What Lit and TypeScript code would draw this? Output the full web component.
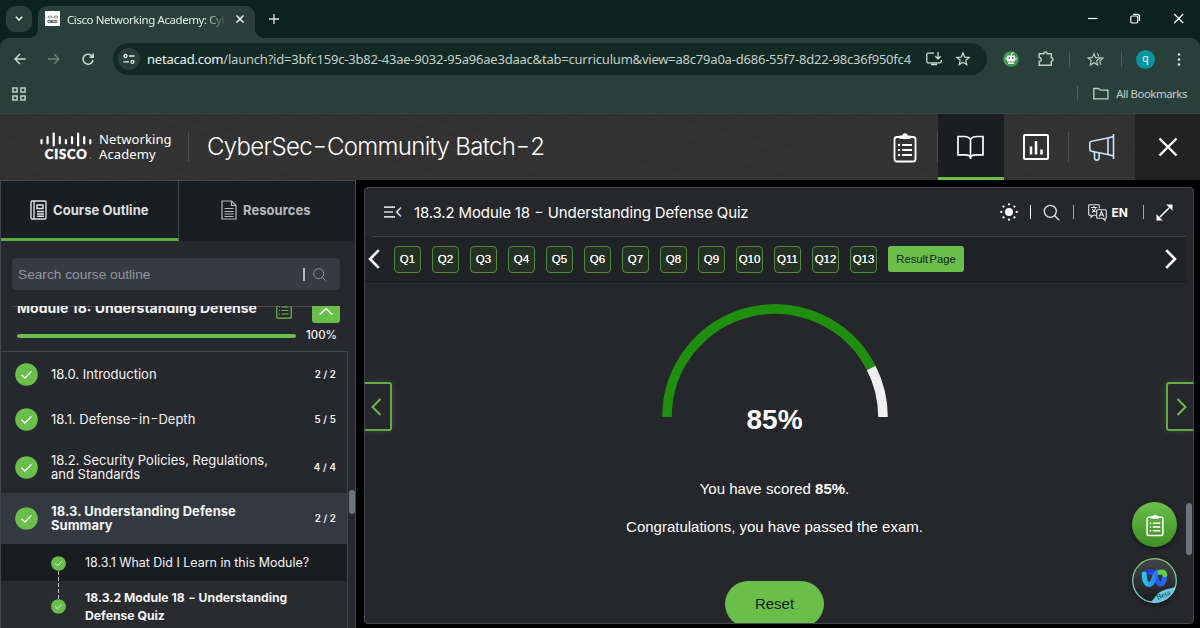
import { LitElement, html, svg, css } from "lit";
import { customElement, property } from "lit/decorators.js";
import { classMap } from "lit/directives/class-map.js";

const base = css`
  :host, * { box-sizing: border-box; }
  svg { display: block; flex: none; overflow: visible; }
  .t { white-space: nowrap; }
  .hy { display: inline-block; padding: 0 .1em; transform: scaleX(1.3) translateY(-.04em); }
`;

/* Hyphens are drawn wider and a little higher than the font's own. */
const wide = (s: string) => s.split("-").map((p, i) => (i ? html`<span class="hy">-</span>${p}` : p));

/* ---------- browser frame ---------- */

@customElement("browser-chrome")
class BrowserChrome extends LitElement {
  static styles = [base, css`
    :host { display: block; height: 113px; background: #0b231e; color: #e3ebe7; font-family: "Noto Sans", "Open Sans", sans-serif; }
    .strip { display: flex; height: 38px; padding: 6px 0 0 6px; background: #0b231e; }
    .menu { width: 26px; height: 26px; border-radius: 9px; background: #29403a; display: flex; align-items: center; justify-content: center; }
    .tab { position: relative; margin-left: 6px; width: 217px; height: 32px; border-radius: 9px 9px 0 0; background: #29403a; display: flex; padding: 5px 0 0 7px; }
    .tab::before, .tab::after { content: ""; position: absolute; bottom: 0; width: 9px; height: 9px; }
    .tab::before { left: -9px; background: radial-gradient(circle at 0 0, transparent 8.6px, #29403a 9.2px); }
    .tab::after { right: -9px; background: radial-gradient(circle at 100% 0, transparent 8.6px, #29403a 9.2px); }
    .title { margin-left: 7px; width: 158px; overflow: hidden; font-size: 11.500px; line-height: 17px; letter-spacing: -0.42px; -webkit-mask-image: linear-gradient(90deg, #000 138px, transparent 159px); mask-image: linear-gradient(90deg, #000 138px, transparent 159px); }
    .x { margin: 2px 0 0 9px; }
    .plus { margin: 8px 0 0 14px; }
    .win { margin-left: auto; display: flex; gap: 32px; padding: 5px 16px 0 0; }
    .body { background: #29403a; height: 75px; border-radius: 9px 9px 0 0; }
    .bar { display: flex; align-items: center; height: 42px; padding-left: 13px; }
    .nav { display: flex; gap: 20px; align-items: center; }
    .omni { margin-left: 18px; width: 874px; height: 32px; border-radius: 16px; background: #122a24; display: flex; align-items: center; padding-left: 5px; }
    .site { width: 22px; height: 22px; border-radius: 50%; background: #29403a; display: flex; align-items: center; justify-content: center; }
    .url { margin-left: 7px; width: 767px; font-size: 13px; letter-spacing: -.21px; line-height: 20px; color: #c3cec9; }
    .url b { font-weight: 400; color: #edf3f0; }
    .inst { margin-left: 12px; }
    .star { margin-left: 14px; }
    .ext { display: flex; align-items: center; margin-left: 16px; }
    .puzzle { margin-left: 19px; }
    .sep { width: 1px; height: 15px; background: #476058; }
    .s1 { margin-left: 14px; }
    .fav, .s2 { margin-left: 17px; }
    .avatar { margin-left: 14px; width: 19px; height: 19px; border-radius: 50%; background: #0795a3; font-size: 10.500px; line-height: 17px; text-align: center; color: #fff; }
    .dots { margin-left: 22px; }
    .marks { display: flex; align-items: center; justify-content: space-between; height: 27px; padding: 0 13px 0 12px; }
    .all { display: flex; align-items: center; font-size: 11.300px; letter-spacing: -.4px; color: #c3cec9; line-height: 16px; }
    .folder { margin: 0 7px 0 15px; }
  `];

  render() {
    return html`
      <div class="strip">
        <div class="menu"><svg width="8" height="6" fill="none" stroke="#e3ebe7" stroke-width="1.600"><path d="M.8 .8 4 4l3.200-3.200"/></svg></div>
        <div class="tab">
          <svg width="15" height="15" viewBox="0 0 15 15"><rect width="15" height="15" fill="#fff"/>
            <path d="M2 6v1M3.500 5v2M5 4v4M6.500 5v2M8 6v1M9.500 5v2M11 4v4M12.500 5v2" stroke="#777" stroke-width=".8"/>
            <text x="2.200" y="12.200" font-size="4" font-weight="800" textLength="10.500" font-family="Inter" fill="#333">CISCO</text></svg>
          <div class="title t">Cisco Networking Academy: Cyber</div>
          <svg class="x" width="12" height="12" viewBox="0 0 12 12" stroke="#f2f7f5" stroke-width="1.500"><path d="M2.500 2.500l7 7M9.500 2.500l-7 7"/></svg>
        </div>
        <svg class="plus" width="10" height="10" stroke="#dce6e1" stroke-width="1.300"><path d="M5 0v10M0 5h10"/></svg>
        <div class="win">
          <svg width="11" height="14" stroke="#fff" stroke-width="1.200"><path d="M1 7.500h9.500"/></svg>
          <svg width="11" height="14" fill="none" stroke="#fff" stroke-width="1.200"><rect x=".8" y="5" width="7" height="7" rx="1.500"/><path d="M3 3.300h4.200a2.300 2.300 0 0 1 2.300 2.300v4.200"/></svg>
          <svg width="11" height="14" stroke="#fff" stroke-width="1.200"><path d="M1.200 3l9 9M10.200 3l-9 9"/></svg>
        </div>
      </div>
      <div class="body">
        <div class="bar">
          <div class="nav">
            <svg width="14" height="14" fill="none" stroke="#cfdad5" stroke-width="1.400"><path d="M12.500 7H2M7 2 2 7l5 5"/></svg>
            <svg width="14" height="14" fill="none" stroke="#6d837b" stroke-width="1.300"><path d="M1 7h10.500M7 2l5 5-5 5"/></svg>
            <svg width="14" height="14" fill="none" stroke="#cfdad5" stroke-width="1.500"><path d="M11.300 4.500A5 5 0 1 0 12 8M12.200 1.500v3.700H8.500"/></svg>
          </div>
          <div class="omni">
            <div class="site"><svg width="12" height="12" fill="none" stroke="#e3ebe7" stroke-width="1.300"><circle cx="2.500" cy="3" r="1.500"/><path d="M6 3h5.500M.5 8.800H6"/><circle cx="9.500" cy="8.800" r="1.500"/></svg></div>
            <div class="url t"><b>netacad.com</b>/launch?id=3bfc159c-3b82-43ae-9032-95a96ae3daac&amp;tab=curriculum&amp;view=a8c79a0a-d686-55f7-8d22-98c36f950fc4</div>
            <svg class="inst" width="16" height="14" fill="none" stroke="#cfdad5" stroke-width="1.300"><path d="M8 1.200H2A1.200 1.200 0 0 0 .8 2.400v7.200a1.200 1.200 0 0 0 1.200 1.200h12a1.200 1.200 0 0 0 1.200-1.200V8M5 12.500h6M12 0v6.500M9.300 4.200 12 6.800l2.700-2.600"/></svg>
            <svg class="star" width="14" height="14" fill="none" stroke="#cfdad5" stroke-width="1.200"><path d="M7 .9l1.700 4.200 4.500.3-3.500 2.900 1.100 4.400L7 10.300l-3.800 2.400 1.100-4.400L.8 5.400l4.500-.3z"/></svg>
          </div>
          <div class="ext">
            <svg width="16" height="16"><circle cx="8" cy="8" r="7.800" fill="#439a52"/><path d="M8.500 5V2.500l2-.8" stroke="#fff" fill="none"/><rect x="4" y="4.500" width="8" height="6" rx="1" fill="#fff"/><path d="M5 11.500h6v1.500H5zM2.600 6.500h1v2.500h-1zM12.400 6.500h1v2.500h-1z" fill="#fff"/><path d="M5.500 6.200H7v1.500H5.500zM9 6.200h1.500v1.500H9z" fill="#2a7b3c"/></svg>
            <svg class="puzzle" width="17" height="16" fill="none" stroke="#c3cec9" stroke-width="1.400"><path d="M1.200 2.700h4.500a1.700 1.700 0 0 1 3.400 0h4.200v4a1.700 1.700 0 0 1 0 3.400v4.200H1.200v-3.800a2 2 0 0 0 0-4z"/></svg>
            <div class="sep s1"></div>
            <svg class="fav" width="17" height="15" fill="none" stroke="#c3cec9" stroke-width="1.100"><path d="M7 1.600l1.700 4 4.300.3-3.300 2.800 1 4.300L7 10.700 3.300 13l1-4.300L1 5.900l4.300-.3zM10.500 1.300l1.300 3.300M13.300 5.800l2.700.3-3.200 2.700 1 4"/></svg>
            <div class="sep s2"></div>
            <div class="avatar">q</div>
            <svg class="dots" width="4" height="15" fill="#dce6e1"><circle cx="2" cy="2.500" r="1.300"/><circle cx="2" cy="7.500" r="1.300"/><circle cx="2" cy="12.500" r="1.300"/></svg>
          </div>
        </div>
        <div class="marks">
          <svg width="14" height="14" fill="none" stroke="#c3cec9" stroke-width="1.500"><path d="M.9.900h4.200v4.200H.9zM8.900.900h4.200v4.200H8.900zM.9 8.900h4.200v4.200H.9zM8.900 8.900h4.200v4.200H8.900z"/></svg>
          <div class="all"><div class="sep"></div>
            <svg class="folder" width="16" height="13" fill="none" stroke="#c3cec9" stroke-width="1.300"><path d="M.8 11.800V1.500h4.800l1.700 1.700h7.600v8.600z"/></svg>
            <span class="t">All Bookmarks</span></div>
        </div>
      </div>`;
  }
}

/* ---------- academy header ---------- */

const clipboard = (w: number, h: number, sw = 1.8) => svg`
  <svg width=${w} height=${h} viewBox="0 0 24 31" fill="none" stroke="#fff" stroke-width=${sw}>
    <rect x="1.500" y="5" width="21" height="24.500" rx="2.500"/>
    <path d="M6.500 6V3.500h2.700a2.900 2.900 0 0 1 5.600 0h2.700V6a1 1 0 0 1-1 1h-9a1 1 0 0 1-1-1" fill="#fff" stroke="none"/>
    <path d="M9 13h10M9 18h10M9 23h10M5 13h2M5 18h2M5 23h2"/>
  </svg>`;

@customElement("academy-header")
class AcademyHeader extends LitElement {
  static styles = [base, css`
    :host { display: flex; height: 67px; border-top: 1px solid #2f4843; background: repeating-linear-gradient(14deg, #323232 0 7px, #343434 9px 10px); color: #fff; }
    .brand { display: flex; width: 189px; height: 30px; margin-top: 18px; padding-left: 40px; border-right: 1px solid #505050; }
    .words { margin-left: 5px; font: 13px/15px "Noto Sans", sans-serif; letter-spacing: .1px; }
    .name { margin: 16px 0 0 18px; font: 350 24px/34px Inter, sans-serif; letter-spacing: -.68px; }
    .tools { margin-left: auto; display: flex; height: 66px; }
    .tool { position: relative; width: 65.500px; display: flex; align-items: center; justify-content: center; }
    .tool.line::after { content: ""; position: absolute; right: 0; top: 18px; width: 1px; height: 30px; background: #515151; }
    .on { background: #1a1d21; border-bottom: 3px solid #6abf4b; padding-top: 3px; }
    .close { background: #222; padding-left: 2px; }
  `];

  render() {
    const bars = [2, 1, 0, 1, 2, 1, 0, 1, 2];
    const ys = (k: number) => (k === 0 ? [1.5, 13.5] : k === 1 ? [5, 11.3] : [8, 11.3]);
    return html`
      <div class="brand">
        <svg width="54" height="30" stroke="#fff" stroke-width="2.200">
          ${bars.map((k, i) => svg`<path stroke-linecap="round" d=${`M${1.5 + i * 6.1} ${ys(k)[0]}V${ys(k)[1]}`}/>`)}
          <text x="4.800" y="27" stroke="#fff" stroke-width=".4" fill="#fff" font-family="Lato, sans-serif" font-size="13" font-weight="900" textLength="42">CISCO</text>
          <circle cx="50.500" cy="26" r=".7" fill="#999" stroke="none"/>
        </svg>
        <div class="words t"><div>Networking</div><div>Academy</div></div>
      </div>
      <div class="name t">${wide("CyberSec-Community Batch-2")}</div>
      <div class="tools">
        <div class="tool line">${clipboard(24, 31)}</div>
        <div class="tool on"><svg width="27" height="25" fill="none" stroke="#fff" stroke-width="1.700"><path d="M13.500 4.200C12 2.200 10 1.500 7 1.500H1v18.300h7.500c3 0 4.300.8 5 2.200.7-1.400 2-2.200 5-2.200H26V1.500h-6c-3 0-5 .7-6.500 2.700zM13.500 4.200V24"/></svg></div>
        <div class="tool line"><svg width="26" height="26" fill="none" stroke="#fff" stroke-width="1.900"><rect x="1" y="1" width="24" height="24" rx="1"/><path stroke-width="2.500" d="M8 20.500v-8M13 20.500V7M18.500 20.500v-5"/></svg></div>
        <div class="tool"><svg width="27" height="28" fill="none" stroke="#c4e6fa" stroke-width="1.600"><path d="M20 5 3.500 8.200a2 2 0 0 0-1.700 2v6a2 2 0 0 0 1.700 2L20 21.500z"/><path d="M20 5l5.500-1.500v19.500L20 21.500M25.500 1v25M6.500 18.800v6a2.300 2.300 0 0 0 4.600 0v-5"/></svg></div>
        <div class="tool close"><svg width="20" height="20" stroke="#fff" stroke-width="2.400"><path d="M1.500 1.500l17 17M18.500 1.500l-17 17"/></svg></div>
      </div>`;
  }
}

/* ---------- course outline ---------- */

const check = (d: number) => svg`
  <svg width=${d} height=${d} viewBox="0 0 23 23"><circle cx="11.500" cy="11.500" r="11.300" fill="#6abf4b"/><path d="M6.500 11.700l3.400 3.300 6.500-6.500" fill="none" stroke="#fff" stroke-width="1.300"/></svg>`;

@customElement("course-outline")
class CourseOutline extends LitElement {
  @property({ attribute: false }) rows = [
    { name: "18.0. Introduction", n: "2 / 2" },
    { name: "18.1. Defense-in-Depth", n: "5 / 5" },
    { name: "18.2. Security Policies, Regulations,\nand Standards", n: "4 / 4", tall: true },
    { name: "18.3. Understanding Defense\nSummary", n: "2 / 2", tall: true, on: true },
  ];

  static styles = [base, css`
    :host { display: flex; flex-direction: column; width: 356px; height: 448px; overflow: hidden; background: #27282e; border: 1px solid #43464c; border-bottom: 0; color: #f3f4f5; font-family: Inter, sans-serif; }
    .tabs { display: flex; height: 60px; flex: none; }
    .tab { flex: 1; display: flex; align-items: center; background: #1a1d21; font-weight: 700; font-size: 13px; color: #b8babd; padding: 0 0 2px 42px; gap: 6px; letter-spacing: .05px; }
    .tab.on { flex: none; width: 178px; color: #dee0e2; border-bottom: 3px solid #5aae3d; border-right: 1px solid #43464c; padding: 1px 0 0 29px; }
    .search { flex: none; display: flex; align-items: center; margin: 17px 15px 0 11px; height: 32px; border-radius: 4px; background: #363a42; padding: 0 14px 0 6px; font: 13.700px "Liberation Sans", sans-serif; color: #93969b; }
    .caret { margin-left: auto; width: 2px; height: 13px; background: #b4b7bb; margin-right: 8px; }
    .scroll { position: relative; margin-top: 16px; flex: 1; overflow: hidden; }
    .mod { display: flex; flex-direction: column; height: 44px; padding: 0 15px 0 16px; }
    .rule { height: 1px; margin: 0 15px 0 11px; background: #45484e; }
    .clip { height: 17px; overflow: hidden; display: flex; align-items: flex-end; margin-top: -1px; }
    .mname { width: 259px; font-weight: 700; font-size: 14px; line-height: 18px; height: 18px; margin-bottom: 6px; }
    .list-ico { margin-bottom: 4px; }
    .up { width: 28px; height: 30px; flex: none; background: #6abf4b; border-radius: 3px; margin-left: auto; display: flex; justify-content: center; padding-top: 14px; }
    .prog { display: flex; align-items: center; justify-content: space-between; height: 23px; font-size: 11.500px; padding-right: 3px; font-weight: 500; }
    .track { width: 279px; height: 4px; border-radius: 2px; background: #6abf4b; margin-top: 3px; }
    .list { width: 347px; border-top: 1px solid #43464c; border-right: 1px solid #43464c; height: 290px; }
    .row { display: flex; align-items: center; height: 45px; padding: 0 11px 0 14px; font-size: 13px; }
    .row.tall { height: 51px; }
    .row.on { background: #343840; font-weight: 700; letter-spacing: .05px; }
    .label { margin-left: 13px; white-space: pre; line-height: 14.500px; margin-top: -1px; }
    .count { margin-left: auto; font-size: 9.700px; font-weight: 600; letter-spacing: .15px; }
    .sub { display: flex; align-items: center; height: 37px; padding: 1px 0 0 50px; background: #191c20; font-size: 12.450px; line-height: 18px; position: relative; }
    .sub.last { height: 50px; background: #2a2b2f; font-weight: 700; font-size: 12.200px; }
    .sub span.s { margin-left: 19px; white-space: pre; }
    .link { position: absolute; left: 57px; top: 27px; width: 1px; height: 28px; background: repeating-linear-gradient(#b5b8bb 0 4px, transparent 4px 6px); z-index: 1; }
    .thumb { position: absolute; right: 0; top: 184px; width: 6px; height: 24px; border-radius: 3px; background: #6d737d; }
  `];

  render() {
    return html`
      <div class="tabs">
        <div class="tab on"><svg width="17" height="20" fill="none" stroke="#dee0e2" stroke-width="1.400"><rect x="1" y="1" width="15" height="18" rx="1"/><path d="M4 1v18M7 5h6v3.500H7zM7 11.500h7M7 14h7M7 16.300h7"/></svg><span class="t">Course Outline</span></div>
        <div class="tab"><svg width="16" height="20" fill="none" stroke="#b8babd" stroke-width="1.200"><path d="M1 1h9.500L15 5.500V19H1zM10.500 1v4.500H15M3.500 8.500h9M3.500 11.500h9M3.500 14h9M3.500 16.500h9"/></svg><span class="t">Resources</span></div>
      </div>
      <div class="search"><span class="t">Search course outline</span><div class="caret"></div><svg width="13" height="13" fill="none" stroke="#93969b" stroke-width="1"><circle cx="5.700" cy="5.700" r="5"/><path d="M9.300 9.300l3.300 3.300"/></svg></div>
      <div class="scroll">
        <div class="rule"></div>
        <div class="mod">
          <div class="clip">
            <div class="mname t">Module 18: Understanding Defense</div>
            <svg class="list-ico" width="16" height="20" fill="none" stroke="#6abf4b" stroke-width="1.200"><rect x=".8" y=".8" width="14.400" height="18.400" rx="1"/><path d="M5.500 8h7M5.500 11.500h7M5.500 15h7M3 8h1M3 11.500h1M3 15h1"/></svg>
            <div class="up"><svg width="14" height="9" fill="none" stroke="#fff" stroke-width="1.600"><path d="M.8 7.500 7 1.500l6.200 6"/></svg></div>
          </div>
          <div class="prog"><div class="track"></div><span>100%</span></div>
        </div>
        <div class="list">
          ${this.rows.map((r) => html`<div class=${classMap({ row: true, tall: !!r.tall, on: !!r.on })}>${check(23)}<div class="label">${wide(r.name)}</div><div class="count">${r.n}</div></div>`)}
          <div class="sub"><div class="link"></div>${check(15)}<span class="s">18.3.1 What Did I Learn in this Module?</span></div>
          <div class="sub last">${check(15)}<span class="s">${wide("18.3.2 Module 18 - Understanding\nDefense Quiz")}</span></div>
        </div>
        <div class="thumb"></div>
      </div>`;
  }
}

/* ---------- quiz panel ---------- */

@customElement("quiz-panel")
class QuizPanel extends LitElement {
  @property({ type: Number }) score = 85;

  static styles = [base, css`
    :host { position: relative; display: flex; flex-direction: column; width: 830px; height: 437px; margin: 7px 0 0 8px; overflow: hidden; background: #26272b; border: 1px solid #45474c; border-radius: 4px; color: #fff; font-family: "Liberation Sans", Arial, sans-serif; }
    .head { display: flex; align-items: center; height: 49px; margin: 0 7px; padding: 0 13px 0 12px; border-bottom: 1px solid #3f4146; flex: none; font-family: Inter, sans-serif; }
    .title { margin-left: 12px; font-size: 15px; letter-spacing: -.14px; }
    .acts { margin-left: auto; display: flex; align-items: center; }
    .bar { width: 1px; height: 14px; background: #a3a5a8; }
    .b1 { margin: 0 12px; background: #fff; }
    .b2 { margin: 0 14px 0 13px; }
    .b3 { margin: 0 12px 0 15px; }
    .en { font-weight: 700; font-size: 12px; margin-left: 5px; }
    .qs { display: flex; align-items: center; height: 45px; padding: 0 9px 0 3px; background: #212227; border-bottom: 1px solid #1a1b1f; flex: none; margin-right: 7px; }
    .list { display: flex; gap: 11px; margin-left: 14px; }
    .q { width: 27px; height: 27px; border: 1px solid #4f8a3c; border-radius: 4px; background: #243024; font-size: 11.500px; line-height: 25px; text-align: center; text-shadow: 0 0 .5px #fff; }
    .q span { margin: 0 -4px; }
    .res { width: 76px; height: 26px; border-radius: 3px; background: #6abf4b; color: #14210e; font-size: 11.300px; line-height: 26px; text-align: center; word-spacing: -2px; }
    .next { margin-left: auto; }
    .body { display: flex; flex-direction: column; align-items: center; padding-top: 22px; margin-right: 9px; flex: 1; }
    .gauge { width: 226px; height: 113px; }
    .pct { font-weight: 700; font-size: 28px; line-height: 32px; margin-top: -13px; }
    p { margin: 0; font-size: 15px; line-height: 18px; }
    .p1 { margin-top: 44px; }
    .p2 { margin-top: 20px; }
    .reset { margin-top: 45px; width: 99px; height: 46px; flex: none; border-radius: 23px; background: #6abf4b; color: #101a0b; font-size: 15px; line-height: 46px; text-align: center; }
    .side { position: absolute; top: 194px; height: 49px; width: 27px; background: #26272b; border: 2px solid #5fae42; display: flex; align-items: center; justify-content: center; box-shadow: 0 0 8px rgba(255,255,255,.12); }
    .l { left: 0; border-left: 0; border-radius: 0 3px 3px 0; padding-right: 2px; }
    .r { right: 0; border-right: 0; border-radius: 3px 0 0 3px; padding-left: 2px; }
    .fab { position: absolute; right: 16px; width: 45px; height: 45px; border-radius: 50%; display: flex; align-items: center; justify-content: center; box-shadow: 0 2px 5px rgba(0,0,0,.4); }
    .notes { top: 314px; background: linear-gradient(#6abf4b, #3f9023); }
    .webex { top: 370px; }
    .thumb { position: absolute; right: 1px; top: 315px; width: 6px; height: 52px; border-radius: 3px; background: #6d737d; }
  `];

  render() {
    const a = Math.PI * (1 - this.score / 100);
    const x = 113 + 108 * Math.cos(a);
    const y = 113 - 108 * Math.sin(a);
    const rays = [0, 1, 2, 3, 4, 5, 6, 7];
    return html`
      <div class="head">
        <svg width="18" height="12" fill="none" stroke="#d4d5d7" stroke-width="1.700"><path d="M0 1.200h11M0 6h9M0 10.800h11M17 1.500 12.700 6l4.300 4.500"/></svg>
        <div class="title t">${wide("18.3.2 Module 18 - Understanding Defense Quiz")}</div>
        <div class="acts">
          <svg width="18" height="18" fill="#fff"><circle cx="9" cy="9" r="4"/>${rays.map((i) => svg`<circle cx=${9 + 7.7 * Math.cos(i * Math.PI / 4)} cy=${9 + 7.7 * Math.sin(i * Math.PI / 4)} r="1.150"/>`)}</svg>
          <div class="bar b1"></div>
          <svg width="17" height="17" fill="none" stroke="#e4e5e6" stroke-width="1.300"><circle cx="7.300" cy="7.300" r="6"/><path d="M11.700 11.700l4.500 4.500"/></svg>
          <div class="bar b2"></div>
          <svg width="19" height="17" fill="none" stroke="#e4e5e6" stroke-width="1.100"><path d="M8.500 11.300H5L3 13.300v-2H1.700A1 1 0 0 1 .7 10.300V1.700a1 1 0 0 1 1-1h8.600a1 1 0 0 1 1 1v2.800M3 3.500h6M6 2v1.500M4 8.500c2-1 3.300-2.500 3.800-5M4.300 5c.8 1.500 2 2.500 3.500 3"/><path d="M9.700 5.700h7.600a1 1 0 0 1 1 1v6.600a1 1 0 0 1-1 1H17v2l-2-2H9.700a1 1 0 0 1-1-1V6.700a1 1 0 0 1 1-1zM11.300 12.500l2.200-5 2.200 5M12.200 11h2.800"/></svg>
          <span class="en">EN</span>
          <div class="bar b3"></div>
          <svg width="17" height="17" stroke="#fff" fill="#fff" stroke-width="1.600"><path d="M4 13 13 4"/><path stroke="none" d="M16.500.5v6.300L10.200.5zM.5 16.500v-6.300l6.300 6.300z"/></svg>
        </div>
      </div>
      <div class="qs">
        <svg width="12" height="20" fill="none" stroke="#fff" stroke-width="2.600"><path d="M10.800 1.200 2 10l8.800 8.800"/></svg>
        <div class="list">
          ${Array.from({ length: 13 }, (_, i) => html`<div class="q t"><span>Q${i + 1}</span></div>`)}
          <div class="res t">Result Page</div>
        </div>
        <svg class="next" width="12" height="20" fill="none" stroke="#fff" stroke-width="2.600"><path d="M1.200 1.200 10 10l-8.800 8.800"/></svg>
      </div>
      <div class="body">
        <svg class="gauge" viewBox="0 0 226 113" fill="none" stroke-width="9.600">
          <path stroke="#1e8f0e" d=${`M5 113A108 108 0 0 1 ${x} ${y}`}/>
          <path stroke="#efeff0" d=${`M${x} ${y}A108 108 0 0 1 221 113`}/>
        </svg>
        <div class="pct">${this.score}%</div>
        <p class="p1">You have scored <b>${this.score}%</b>.</p>
        <p class="p2">Congratulations, you have passed the exam.</p>
        <div class="reset">Reset</div>
      </div>
      <div class="side l"><svg width="11" height="18" fill="none" stroke="#6abf4b" stroke-width="1.900"><path d="M9.500 1 1.500 9l8 8"/></svg></div>
      <div class="side r"><svg width="11" height="18" fill="none" stroke="#6abf4b" stroke-width="1.900"><path d="M1.500 1l8 8-8 8"/></svg></div>
      <div class="fab notes">${clipboard(18, 24, 2)}</div>
      <div class="fab webex">
        <svg width="45" height="45">
          <defs>
            <linearGradient id="bg" x1="0" y1="0" x2="0" y2="1"><stop offset="0" stop-color="#45474a"/><stop offset="1" stop-color="#1a1b1d"/></linearGradient>
            <linearGradient id="rim" x1="0" y1="0" x2="0" y2="1"><stop offset="0" stop-color="#7fc97a"/><stop offset="1" stop-color="#74d0ea"/></linearGradient>
            <linearGradient id="wa"><stop offset="0" stop-color="#27c4f0"/><stop offset="1" stop-color="#2560e8"/></linearGradient>
            <linearGradient id="wb"><stop offset="0" stop-color="#1a3fd6"/><stop offset="1" stop-color="#2a6df0"/></linearGradient>
            <clipPath id="c"><circle cx="22.500" cy="22.500" r="22"/></clipPath>
          </defs>
          <circle cx="22.500" cy="22.500" r="21.800" fill="url(#bg)"/>
          <path clip-path="url(#c)" fill="#6ccbe0" d="M17 45c6-3 6-9 13-12 6-3 10-2 16-6v20H17z"/>
          <circle cx="22.500" cy="22.500" r="21.800" fill="none" stroke="url(#rim)" stroke-width="1.300"/>
          <g fill="none" stroke-width="5" stroke-linecap="round">
            <path stroke="url(#wb)" d="M16 14.500c4-2.500 6 1 7.500 5s3.500 8.500 7 5.500c1.500-1.500 2-4.500 2-7"/>
            <path stroke="url(#wa)" d="M12.200 16c0 6 1.800 10.500 5 10.500s4.500-5 6-9 3.200-4 5-3"/>
            <path stroke="#62d143" d="M28 14.300c2-.8 4.300-.3 4.800 2.200"/>
          </g>
          <text x="0" y="0" transform="translate(25.500 42) rotate(-22)" font-family="Liberation Serif, serif" font-size="8" fill="#12344a">Beta</text>
        </svg>
      </div>
      <div class="thumb"></div>`;
  }
}

@customElement("app-root")
class AppRoot extends LitElement {
  static styles = css`
    :host { display: flex; flex-direction: column; width: 1200px; height: 628px; overflow: hidden; background: #000; }
    .main { display: flex; flex: 1; }
  `;
  render() {
    return html`<browser-chrome></browser-chrome><academy-header></academy-header>
      <div class="main"><course-outline></course-outline><quiz-panel></quiz-panel></div>`;
  }
}
